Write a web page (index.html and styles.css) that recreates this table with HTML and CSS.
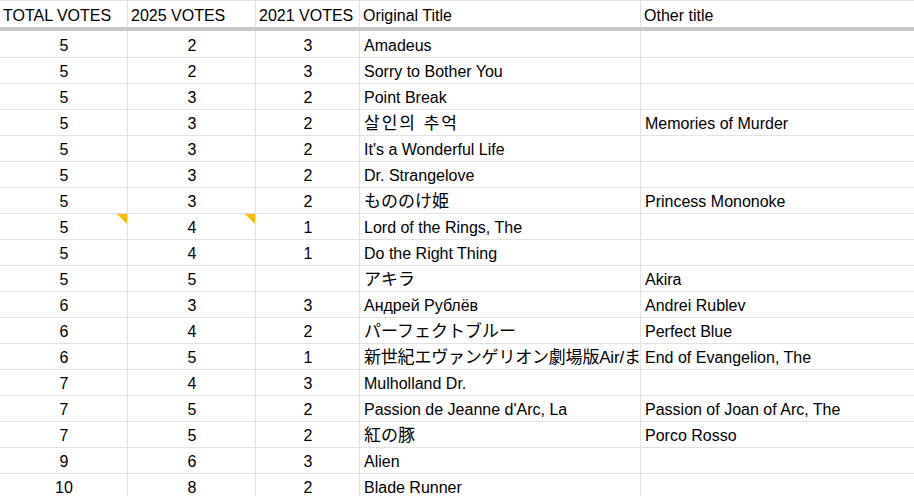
FILE: index.html
```html
<!DOCTYPE html>
<html>
<head>
<meta charset="utf-8">
<link rel="stylesheet" href="styles.css">
</head>
<body>
<div class="sheet">
  <div class="row head">
    <div class="cell">TOTAL VOTES</div>
    <div class="cell">2025 VOTES</div>
    <div class="cell">2021 VOTES</div>
    <div class="cell">Original Title</div>
    <div class="cell">Other title</div>
  </div>
  <div class="row first">
    <div class="cell num">5</div><div class="cell num">2</div><div class="cell num">3</div>
    <div class="cell">Amadeus</div><div class="cell"></div>
  </div>
  <div class="row">
    <div class="cell num">5</div><div class="cell num">2</div><div class="cell num">3</div>
    <div class="cell">Sorry to Bother You</div><div class="cell"></div>
  </div>
  <div class="row">
    <div class="cell num">5</div><div class="cell num">3</div><div class="cell num">2</div>
    <div class="cell">Point Break</div><div class="cell"></div>
  </div>
  <div class="row">
    <div class="cell num">5</div><div class="cell num">3</div><div class="cell num">2</div>
    <div class="cell ko">살인의 추억</div><div class="cell">Memories of Murder</div>
  </div>
  <div class="row">
    <div class="cell num">5</div><div class="cell num">3</div><div class="cell num">2</div>
    <div class="cell">It's a Wonderful Life</div><div class="cell"></div>
  </div>
  <div class="row">
    <div class="cell num">5</div><div class="cell num">3</div><div class="cell num">2</div>
    <div class="cell">Dr. Strangelove</div><div class="cell"></div>
  </div>
  <div class="row">
    <div class="cell num">5</div><div class="cell num">3</div><div class="cell num">2</div>
    <div class="cell cjk">もののけ姫</div><div class="cell">Princess Mononoke</div>
  </div>
  <div class="row">
    <div class="cell num noted">5<span class="note"></span></div><div class="cell num noted">4<span class="note"></span></div><div class="cell num">1</div>
    <div class="cell">Lord of the Rings, The</div><div class="cell"></div>
  </div>
  <div class="row">
    <div class="cell num">5</div><div class="cell num">4</div><div class="cell num">1</div>
    <div class="cell">Do the Right Thing</div><div class="cell"></div>
  </div>
  <div class="row">
    <div class="cell num">5</div><div class="cell num">5</div><div class="cell num"></div>
    <div class="cell cjk">アキラ</div><div class="cell">Akira</div>
  </div>
  <div class="row">
    <div class="cell num">6</div><div class="cell num">3</div><div class="cell num">3</div>
    <div class="cell">Андрей Рублёв</div><div class="cell">Andrei Rublev</div>
  </div>
  <div class="row">
    <div class="cell num">6</div><div class="cell num">4</div><div class="cell num">2</div>
    <div class="cell cjk">パーフェクトブルー</div><div class="cell">Perfect Blue</div>
  </div>
  <div class="row">
    <div class="cell num">6</div><div class="cell num">5</div><div class="cell num">1</div>
    <div class="cell cjk tight">新世紀エヴァンゲリオン劇場版Air/ま</div><div class="cell">End of Evangelion, The</div>
  </div>
  <div class="row">
    <div class="cell num">7</div><div class="cell num">4</div><div class="cell num">3</div>
    <div class="cell">Mulholland Dr.</div><div class="cell"></div>
  </div>
  <div class="row">
    <div class="cell num">7</div><div class="cell num">5</div><div class="cell num">2</div>
    <div class="cell">Passion de Jeanne d'Arc, La</div><div class="cell">Passion of Joan of Arc, The</div>
  </div>
  <div class="row">
    <div class="cell num">7</div><div class="cell num">5</div><div class="cell num">2</div>
    <div class="cell cjk">紅の豚</div><div class="cell">Porco Rosso</div>
  </div>
  <div class="row">
    <div class="cell num">9</div><div class="cell num">6</div><div class="cell num">3</div>
    <div class="cell">Alien</div><div class="cell"></div>
  </div>
  <div class="row">
    <div class="cell num">10</div><div class="cell num">8</div><div class="cell num">2</div>
    <div class="cell">Blade Runner</div><div class="cell"></div>
  </div>
</div>
</body>
</html>
```
FILE: styles.css
```css
html, body {
  margin: 0;
  padding: 0;
  background: #ffffff;
}
body {
  font-family: "Liberation Sans", Arial, "Noto Sans CJK JP", "Noto Sans CJK KR", sans-serif;
  font-size: 16px;
  color: #000000;
  overflow: hidden;
}
.sheet {
  width: 914px;
}
.row {
  display: grid;
  grid-template-columns: 128px 128px 104px 281px 1fr;
  height: 26px;
}
.row.head {
  height: 31px;
  border-top: 1px solid #e2e2e2;
  border-bottom: 4px solid #c7c7c7;
  box-sizing: border-box;
}
.row.first {
  height: 27px;
}
.cell {
  box-sizing: border-box;
  border-right: 1px solid #e2e2e2;
  border-bottom: 1px solid #e2e2e2;
  padding: 0 3px 2px 4px;
  line-height: 18px;
  display: flex;
  align-items: flex-end;
  white-space: nowrap;
  overflow: hidden;
  position: relative;
}
.head .cell {
  border-bottom: none;
  padding-left: 3px;
}
.cell:last-child {
  border-right: none;
}
.cell.num {
  justify-content: center;
}
.cjk {
  font-family: "Liberation Sans", "Noto Sans CJK JP", sans-serif;
  font-size: 17px;
}
.cjk.tight {
  letter-spacing: -0.2px;
  padding-right: 0;
}
.ko {
  font-family: "Liberation Sans", "Noto Sans CJK KR", sans-serif;
  font-size: 17px;
  letter-spacing: 2px;
}
.note {
  position: absolute;
  top: 0;
  right: 0;
  width: 0;
  height: 0;
  border-top: 10px solid #fbbc04;
  border-left: 10px solid transparent;
}
```
